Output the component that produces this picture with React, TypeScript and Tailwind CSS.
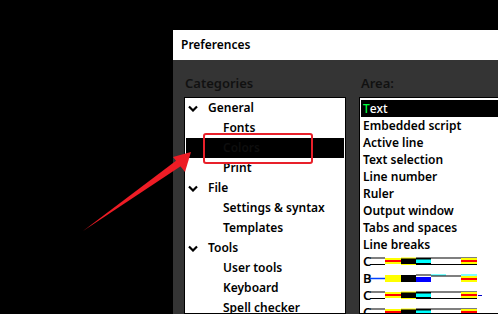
import React from 'react';

const font = { fontFamily: '"Noto Sans", "Liberation Sans", sans-serif' };

function Chevron() {
  return (
    <svg width="10" height="7" viewBox="0 0 10 7" className="shrink-0">
      <polyline points="1,1.5 5,5.5 9,1.5" fill="none" stroke="#000" strokeWidth="2.2" />
    </svg>
  );
}

const categories: { label: string; group?: boolean; selected?: boolean }[] = [
  { label: 'General', group: true },
  { label: 'Fonts' },
  { label: 'Colors', selected: true },
  { label: 'Print' },
  { label: 'File', group: true },
  { label: 'Settings & syntax' },
  { label: 'Templates' },
  { label: 'Tools', group: true },
  { label: 'User tools' },
  { label: 'Keyboard' },
  { label: 'Spell checker' },
];

const areas = [
  'Embedded script',
  'Active line',
  'Text selection',
  'Line number',
  'Ruler',
  'Output window',
  'Tabs and spaces',
  'Line breaks',
];

// little preview strip of a colour scheme row
function Swatch({ letter, variant }: { letter: string; variant: number }) {
  const stripes = (x: number) => (
    <g>
      <rect x={x} y="1" width="16" height="6" fill="#ffff00" />
      <rect x={x} y="3" width="16" height="2" fill="#ff0000" />
    </g>
  );
  return (
    <div className="flex items-center h-[17px] pl-[2px] shrink-0">
      <span className="text-[13px] font-semibold leading-none w-[7px]">{letter}</span>
      <svg width="120" height="9" viewBox="0 0 120 9">
        {variant === 1 ? (
          <g>
            <line x1="0" y1="4.5" x2="15" y2="4.5" stroke="#0040ff" strokeWidth="1.5" />
            <rect x="15" y="1" width="16" height="7" fill="#ffff00" />
            <rect x="31" y="1" width="15" height="7" fill="#000" />
            <rect x="46" y="0.5" width="15" height="1" fill="#000" />
            <rect x="46" y="3" width="15" height="5" fill="#0000ff" />
            <rect x="61" y="0.5" width="15" height="1" fill="#00ffff" />
            <rect x="61" y="1.5" width="30" height="1" fill="#000" />
            <rect x="91" y="0.5" width="16" height="1" fill="#00ffff" />
            <rect x="91" y="2" width="16" height="6" fill="#ffff00" />
            <rect x="91" y="4" width="16" height="2" fill="#ff0000" />
          </g>
        ) : (
          <g>
            <rect x="0" y="0.5" width="15" height="1" fill="#000" />
            <rect x="0" y="7" width="15" height="1" fill="#000" />
            {stripes(15)}
            <rect x="31" y="0.5" width="15" height="7.5" fill="#ffff00" />
            <rect x="31" y="1.5" width="15" height="5.5" fill="#000" />
            <rect x="46" y="0.5" width="15" height="7.5" fill="#000" />
            <rect x="46" y="2.5" width="15" height="3.5" fill="#00ffff" />
            <rect x="61" y="0.5" width="30" height="1" fill="#000" />
            <rect x="61" y="7" width="30" height="1" fill="#000" />
            <rect x="91" y="0.5" width="16" height="7.5" fill="#000" />
            {stripes(91)}
            {variant === 2 && <rect x="108" y="4" width="4" height="1" fill="#0000cc" />}
          </g>
        )}
      </svg>
    </div>
  );
}

export default function App() {
  return (
    <div className="relative w-[498px] h-[314px] overflow-hidden bg-black text-black" style={font}>
      <div className="h-[30px]" />
      <div className="ml-[173px] h-[284px] flex flex-col">
        <div className="h-[30px] shrink-0 bg-white flex items-center pl-[8px] text-[12px] font-semibold">Preferences</div>
        <div className="flex-1 min-h-0 bg-[#343434] pl-[11px] flex gap-[13px]">
          <div className="w-[162px] flex flex-col min-h-0">
            <div className="h-[37px] shrink-0 flex items-end pb-[4px] pl-[1px] text-[13px] font-semibold text-[#111]">Categories</div>
            <div className="flex-1 min-h-0 overflow-hidden bg-white border border-black px-[1px] text-[12px] font-semibold">
              {categories.map((c) => (
                <div
                  key={c.label}
                  className={`h-[20px] flex items-center ${c.selected ? 'bg-black text-[#0e0e0e]' : ''} ${c.group ? 'pl-[2px] gap-[10px]' : 'pl-[37px]'}`}
                >
                  {c.group && <Chevron />}
                  <span>{c.label}</span>
                </div>
              ))}
            </div>
          </div>
          <div className="flex-1 flex flex-col min-h-0">
            <div className="h-[37px] shrink-0 flex items-end pb-[4px] pl-[2px] text-[13px] font-semibold text-[#111]">Area:</div>
            <div className="flex-1 min-h-0 overflow-hidden bg-white border border-black border-r-0 pl-[1px] pt-[2px] text-[12px] font-semibold">
              <div className="h-[17px] bg-black text-white flex items-center pl-[2px] font-medium">
                <span className="text-[#00ff40]">T</span>ext
              </div>
              {areas.map((a) => (
                <div key={a} className="h-[17px] flex items-center pl-[2px]">{a}</div>
              ))}
              <Swatch letter="C" variant={0} />
              <Swatch letter="B" variant={1} />
              <Swatch letter="C" variant={2} />
              <Swatch letter="C" variant={0} />
            </div>
          </div>
        </div>
      </div>

      {/* annotation: red box + arrow */}
      <div className="absolute left-[203px] top-[133px] w-[110px] h-[31px] border-2 border-[#e8202a] rounded-[3px]" />
      <svg className="absolute left-0 top-0 pointer-events-none" width="498" height="314" viewBox="0 0 498 314">
        <polygon points="83,231 177,160 181,166" fill="#ee1c25" />
        <polygon points="191,152 173,157 185,172" fill="#ee1c25" />
      </svg>
    </div>
  );
}
